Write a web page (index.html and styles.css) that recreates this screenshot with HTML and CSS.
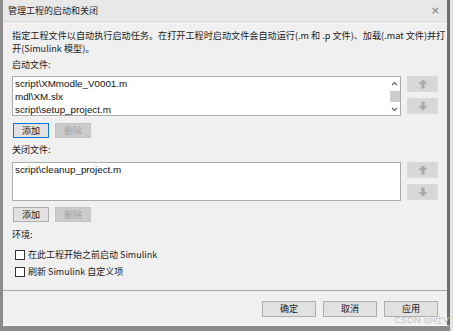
FILE: index.html
```html
<!DOCTYPE html>
<html lang="zh-CN">
<head>
<meta charset="utf-8">
<title>管理工程的启动和关闭</title>
<link rel="stylesheet" href="styles.css">
</head>
<body>
<div class="dialog">
  <div class="titlebar">
    <span class="title">管理工程的启动和关闭</span>
    <span class="close">×</span>
  </div>
  <div class="content">
    <p class="desc">指定工程文件以自动执行启动任务。在打开工程时启动文件会自动运行(.m 和 .p 文件)、加载(.mat 文件)并打<br>开(Simulink 模型)。</p>
    <div class="label">启动文件:</div>
    <div class="filerow">
      <div class="listbox lb1">
        <div class="items">
          <div class="item">script\XMmodle_V0001.m</div>
          <div class="item">mdl\XM.slx</div>
          <div class="item">script\setup_project.m</div>
        </div>
        <div class="scrollbar">
          <svg class="chev" width="7" height="5" viewBox="0 0 7 5"><path d="M1 4 L3.5 1.5 L6 4" fill="none" stroke="#606060" stroke-width="1.1"/></svg>
          <div class="thumb"></div>
          <svg class="chev" width="7" height="5" viewBox="0 0 7 5"><path d="M1 1 L3.5 3.5 L6 1" fill="none" stroke="#606060" stroke-width="1.1"/></svg>
        </div>
      </div>
      <div class="movebtns">
        <div class="move"><svg width="10" height="10" viewBox="0 0 10 10"><path d="M5 0.5 L9.5 5 L6.6 5 L6.6 9.5 L3.4 9.5 L3.4 5 L0.5 5 Z" fill="#a9a9a9"/></svg></div>
        <div class="move"><svg width="10" height="10" viewBox="0 0 10 10"><path d="M5 9.5 L9.5 5 L6.6 5 L6.6 0.5 L3.4 0.5 L3.4 5 L0.5 5 Z" fill="#a9a9a9"/></svg></div>
      </div>
    </div>
    <div class="btnrow">
      <div class="btn focus">添加</div>
      <div class="btn disabled">删除</div>
    </div>
    <div class="label l2">关闭文件:</div>
    <div class="filerow f2">
      <div class="listbox lb2">
        <div class="items">
          <div class="item">script\cleanup_project.m</div>
        </div>
      </div>
      <div class="movebtns">
        <div class="move"><svg width="10" height="10" viewBox="0 0 10 10"><path d="M5 0.5 L9.5 5 L6.6 5 L6.6 9.5 L3.4 9.5 L3.4 5 L0.5 5 Z" fill="#a9a9a9"/></svg></div>
        <div class="move"><svg width="10" height="10" viewBox="0 0 10 10"><path d="M5 9.5 L9.5 5 L6.6 5 L6.6 0.5 L3.4 0.5 L3.4 5 L0.5 5 Z" fill="#a9a9a9"/></svg></div>
      </div>
    </div>
    <div class="btnrow b2">
      <div class="btn">添加</div>
      <div class="btn disabled">删除</div>
    </div>
    <div class="label l3">环境:</div>
    <label class="check c1"><span class="box"></span>在此工程开始之前启动 Simulink</label>
    <label class="check c2"><span class="box"></span>刷新 Simulink 自定义项</label>
  </div>
  <div class="footer">
    <div class="btn fbtn">确定</div>
    <div class="btn fbtn">取消</div>
    <div class="btn fbtn">应用</div>
  </div>
  <span class="watermark">CSDN @吐V</span>
</div>
</body>
</html>
```
FILE: styles.css
```css
* { box-sizing: border-box; }
html, body { margin: 0; padding: 0; }
body {
  width: 453px;
  height: 331px;
  overflow: hidden;
  background: linear-gradient(to right, #8b8b8b 0, #8b8b8b 450px, #e4e4e4 450px);
  font-family: "Noto Sans CJK SC", "Noto Sans", sans-serif;
  color: #1a1a1a;
}
.dialog {
  position: relative;
  margin-left: 3px;
  width: 447px;
  height: 326px;
  background: #f0f0f0;
  border-right: 3px solid #6e6e6e;
  border-bottom: 1px solid #fafafa;
  display: flex;
  flex-direction: column;
}
.titlebar {
  height: 22px;
  flex: none;
  background: #e8e8e8;
  border-bottom: 1px solid #d9d9d9;
  display: flex;
  align-items: center;
  justify-content: space-between;
  padding: 0 7px 0 5px;
}
.title { font-size: 9px; line-height: 12px; color: #1f1f1f; }
.close { font-size: 11px; line-height: 12px; color: #777; font-family: "DejaVu Sans", sans-serif; }
.content {
  height: 268px;
  flex: none;
  padding: 7px 0 0 9px;
  display: flex;
  flex-direction: column;
  align-items: flex-start;
}
.desc {
  margin: 0;
  font-size: 9.15px;
  line-height: 13px;
  white-space: nowrap;
  color: #1a1a1a;
}
.label { font-size: 9px; line-height: 13px; margin-top: 3px; color: #222; }
.label.l2 { margin-top: 5px; }
.label.l3 { margin-top: 6px; }
.filerow { display: flex; gap: 6px; margin-top: 5px; }
.filerow.f2 { margin-top: 6px; }
.listbox {
  width: 389px;
  height: 40px;
  background: #fff;
  border: 1px solid #acacac;
  display: flex;
  overflow: hidden;
}
.listbox.lb2 { height: 39px; }
.items { flex: 1; padding-left: 2px; }
.item {
  font-family: "Liberation Sans", "Noto Sans CJK SC", sans-serif;
  font-size: 9.8px;
  line-height: 13px;
  white-space: nowrap;
  color: #111;
}
.scrollbar {
  width: 11px;
  height: 100%;
  background: #fff;
  display: flex;
  flex-direction: column;
  align-items: center;
  justify-content: space-between;
  padding: 4px 0 3px;
}
.thumb { width: 10px; height: 11px; background: #cdcdcd; }
.movebtns { display: flex; flex-direction: column; gap: 6px; }
.move {
  width: 31px;
  height: 16px;
  background: #d7d7d7;
  border: 1px solid #dadada;
  display: flex;
  align-items: center;
  justify-content: center;
}
.btnrow { display: flex; gap: 6px; margin-top: 7px; margin-left: 1px; }
.btnrow.b2 { margin-top: 6px; }
.btn {
  height: 15px;
  width: 36px;
  background: #e1e1e1;
  border: 1px solid #adadad;
  font-size: 9px;
  line-height: 13px;
  text-align: center;
  color: #1a1a1a;
}
.btn.focus { border-color: #0a78d4; }
.btn.disabled { background: #cccccc; border-color: #c4c4c4; color: #a3a3a3; }
.check {
  display: flex;
  align-items: center;
  gap: 3px;
  font-size: 9px;
  line-height: 13px;
  margin-left: 3px;
  color: #1a1a1a;
}
.check.c1 { margin-top: 7px; }
.check.c2 { margin-top: 4px; }
.box {
  width: 10px;
  height: 10px;
  background: #fff;
  border: 1px solid #333;
}
.footer {
  flex: 1;
  border-top: 1px solid #a8a8a8;
  display: flex;
  justify-content: flex-end;
  align-items: flex-start;
  gap: 7px;
  padding: 10px 9px 0 0;
}
.btn.fbtn { width: 54px; height: 16px; line-height: 14px; }
.watermark {
  position: absolute;
  left: 391px;
  top: 314px;
  font-family: "Liberation Sans", "Noto Sans CJK SC", sans-serif;
  font-size: 9.5px;
  line-height: 11px;
  color: #c6c6c6;
  white-space: nowrap;
}
```
